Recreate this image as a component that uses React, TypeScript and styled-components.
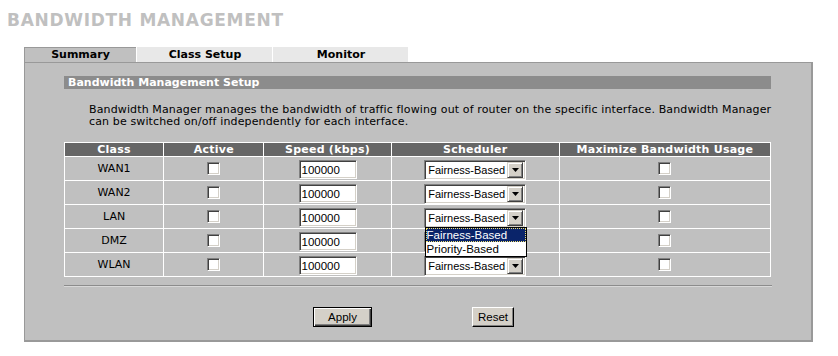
import React from "react";
import styled, { createGlobalStyle } from "styled-components";

const GlobalStyle = createGlobalStyle`
  html, body {
    margin: 0;
    padding: 0;
    background: #ffffff;
  }
  body {
    font-family: "DejaVu Sans", Verdana, sans-serif;
    font-size: 11px;
    color: #000;
  }
`;

const Page = styled.div`
  padding: 10px 0 0 7px;
`;

const Title = styled.h1`
  margin: 0;
  font-size: 17px;
  line-height: 20px;
  font-weight: bold;
  color: #c0c0c0;
  letter-spacing: 0.7px;
`;

const Frame = styled.div`
  margin: 17px 0 0 17px;
  width: 789px;
`;

const TabRow = styled.div`
  display: flex;
  gap: 1px;
  height: 15px;
`;

const Tab = styled.div<{ $active?: boolean }>`
  box-sizing: border-box;
  width: ${(p) => (p.$active ? "112px" : "135px")};
  background: ${(p) => (p.$active ? "#c0c0c0" : "#e8e8e8")};
  border-top: 1px solid ${(p) => (p.$active ? "#999" : "#e8e8e8")};
  border-left: 1px solid ${(p) => (p.$active ? "#999" : "#e8e8e8")};
  font-weight: bold;
  font-size: 11px;
  line-height: 14px;
  text-align: center;
  color: #000;
`;

const Panel = styled.div`
  box-sizing: border-box;
  background: #c0c0c0;
  border-top: 1px solid #999;
  border-left: 1px solid #999;
  border-right: 2px solid #999;
  border-bottom: 2px solid #999;
  padding: 13px 40px 13px 39px;
  height: 280px;
`;

const SectionBar = styled.div`
  background: #8c8c8c;
  color: #fff;
  font-weight: bold;
  font-size: 11px;
  line-height: 13px;
  height: 13px;
  padding-left: 4px;
`;

const Intro = styled.p`
  margin: 15px -12px 0 25px;
  font-size: 11px;
  line-height: 12px;
  letter-spacing: 0.13px;
`;

const Grid = styled.table`
  margin-top: 14px;
  width: 707px;
  border-collapse: collapse;
`;

const HeadCell = styled.th<{ $w: number }>`
  width: ${(p) => p.$w}px;
  background: #666;
  color: #fff;
  font-weight: bold;
  font-size: 11px;
  line-height: 13px;
  letter-spacing: 0.25px;
  border: 1px solid #fff;
  padding: 0;
  height: 13px;
`;

const Cell = styled.td`
  border: 1px solid #fff;
  padding: 0;
  height: 23px;
  text-align: center;
  vertical-align: middle;
  position: relative;
  font-weight: normal;
  font-size: 11px;
`;

const Check = styled.span`
  display: inline-block;
  box-sizing: border-box;
  width: 13px;
  height: 13px;
  margin-top: 3px;
  background: #fff;
  border-top: 1px solid #808080;
  border-left: 1px solid #808080;
  border-right: 1px solid #fff;
  border-bottom: 1px solid #fff;
  box-shadow: inset 1px 1px 0 #404040, inset -1px -1px 0 #d4d0c8;
`;

const SpeedBox = styled.span`
  display: inline-block;
  box-sizing: border-box;
  width: 58px;
  height: 19px;
  margin-top: 2px;
  padding: 2px 0 0 2px;
  background: #fff;
  text-align: left;
  font-family: "Liberation Sans", Arial, sans-serif;
  font-size: 11.5px;
  line-height: 14px;
  border-top: 1px solid #808080;
  border-left: 1px solid #808080;
  border-right: 1px solid #fff;
  border-bottom: 1px solid #fff;
  box-shadow: inset 1px 1px 0 #404040, inset -1px -1px 0 #d4d0c8;
`;

const Picker = styled.span`
  display: inline-flex;
  box-sizing: border-box;
  width: 102px;
  height: 20px;
  margin-top: 2px;
  padding: 2px;
  background: #fff;
  text-align: left;
  border-top: 1px solid #808080;
  border-left: 1px solid #808080;
  border-right: 1px solid #fff;
  border-bottom: 1px solid #fff;
  box-shadow: inset 1px 1px 0 #404040, inset -1px -1px 0 #d4d0c8;
`;

const PickerText = styled.span`
  flex: 1;
  font-family: "Liberation Sans", Arial, sans-serif;
  font-size: 11px;
  line-height: 15px;
  padding-left: 1px;
  white-space: nowrap;
  overflow: hidden;
`;

const PickerArrow = styled.span`
  box-sizing: border-box;
  width: 16px;
  height: 16px;
  margin-top: -1px;
  background: #d4d0c8;
  border-top: 1px solid #d4d0c8;
  border-left: 1px solid #d4d0c8;
  border-right: 1px solid #404040;
  border-bottom: 1px solid #404040;
  box-shadow: inset 1px 1px 0 #fff, inset -1px -1px 0 #808080;
  display: flex;
  align-items: center;
  justify-content: center;
`;

const DropList = styled.div`
  position: absolute;
  left: 33px;
  top: 22px;
  z-index: 2;
  box-sizing: border-box;
  width: 102px;
  background: #fff;
  border: 1px solid #000;
  text-align: left;
  font-family: "Liberation Sans", Arial, sans-serif;
  font-size: 11.5px;
  line-height: 14px;
`;

const DropItem = styled.div<{ $selected?: boolean }>`
  padding-left: 1px;
  height: 14px;
  background: ${(p) => (p.$selected ? "#0a246a" : "#fff")};
  color: ${(p) => (p.$selected ? "#fff" : "#000")};
  outline: ${(p) => (p.$selected ? "1px dotted #f0e070" : "none")};
  outline-offset: -1px;
`;

const Rule = styled.div`
  margin-top: 8px;
  width: 708px;
  border-top: 1px solid #8c8c8c;
  border-bottom: 1px solid #d8d8d8;
`;

const ButtonRow = styled.div`
  display: flex;
  gap: 100px;
  padding-left: 249px;
  margin-top: 20px;
`;

const Button = styled.button<{ $default?: boolean; $w: number }>`
  box-sizing: border-box;
  width: ${(p) => p.$w}px;
  height: 20px;
  padding: 0;
  background: #d4d0c8;
  font-family: "Liberation Sans", Arial, sans-serif;
  font-size: 11.5px;
  color: #000;
  border: 1px solid ${(p) => (p.$default ? "#000" : "#fff")};
  border-right-color: #000;
  border-bottom-color: #000;
  box-shadow: ${(p) =>
    p.$default
      ? "inset 1px 1px 0 #fff, inset -1px -1px 0 #404040, inset -2px -2px 0 #808080"
      : "inset -1px -1px 0 #808080"};
`;

const ArrowIcon = () => (
  <svg width="7" height="4" viewBox="0 0 7 4">
    <path d="M0 0h7L3.5 4z" fill="#000" />
  </svg>
);

const Scheduler = () => (
  <Picker>
    <PickerText>Fairness-Based</PickerText>
    <PickerArrow>
      <ArrowIcon />
    </PickerArrow>
  </Picker>
);

const rows = ["WAN1", "WAN2", "LAN", "DMZ", "WLAN"];

export default function App() {
  return (
    <>
      <GlobalStyle />
      <Page>
        <Title>BANDWIDTH MANAGEMENT</Title>
        <Frame>
          <TabRow>
            <Tab $active>Summary</Tab>
            <Tab>Class Setup</Tab>
            <Tab>Monitor</Tab>
          </TabRow>
          <Panel>
            <SectionBar>Bandwidth Management Setup</SectionBar>
            <Intro>
              Bandwidth Manager manages the bandwidth of traffic flowing out of router on the
              specific interface. Bandwidth Manager can be switched on/off independently for each
              interface.
            </Intro>
            <Grid>
              <thead>
                <tr>
                  <HeadCell $w={99}>Class</HeadCell>
                  <HeadCell $w={100}>Active</HeadCell>
                  <HeadCell $w={127}>Speed (kbps)</HeadCell>
                  <HeadCell $w={168}>Scheduler</HeadCell>
                  <HeadCell $w={212}>Maximize Bandwidth Usage</HeadCell>
                </tr>
              </thead>
              <tbody>
                {rows.map((name) => (
                  <tr key={name}>
                    <Cell>{name}</Cell>
                    <Cell>
                      <Check />
                    </Cell>
                    <Cell>
                      <SpeedBox>100000</SpeedBox>
                    </Cell>
                    <Cell>
                      <Scheduler />
                      {name === "LAN" && (
                        <DropList>
                          <DropItem $selected>Fairness-Based</DropItem>
                          <DropItem>Priority-Based</DropItem>
                        </DropList>
                      )}
                    </Cell>
                    <Cell>
                      <Check />
                    </Cell>
                  </tr>
                ))}
              </tbody>
            </Grid>
            <Rule />
            <ButtonRow>
              <Button $default $w={59}>Apply</Button>
              <Button $w={42}>Reset</Button>
            </ButtonRow>
          </Panel>
        </Frame>
      </Page>
    </>
  );
}
